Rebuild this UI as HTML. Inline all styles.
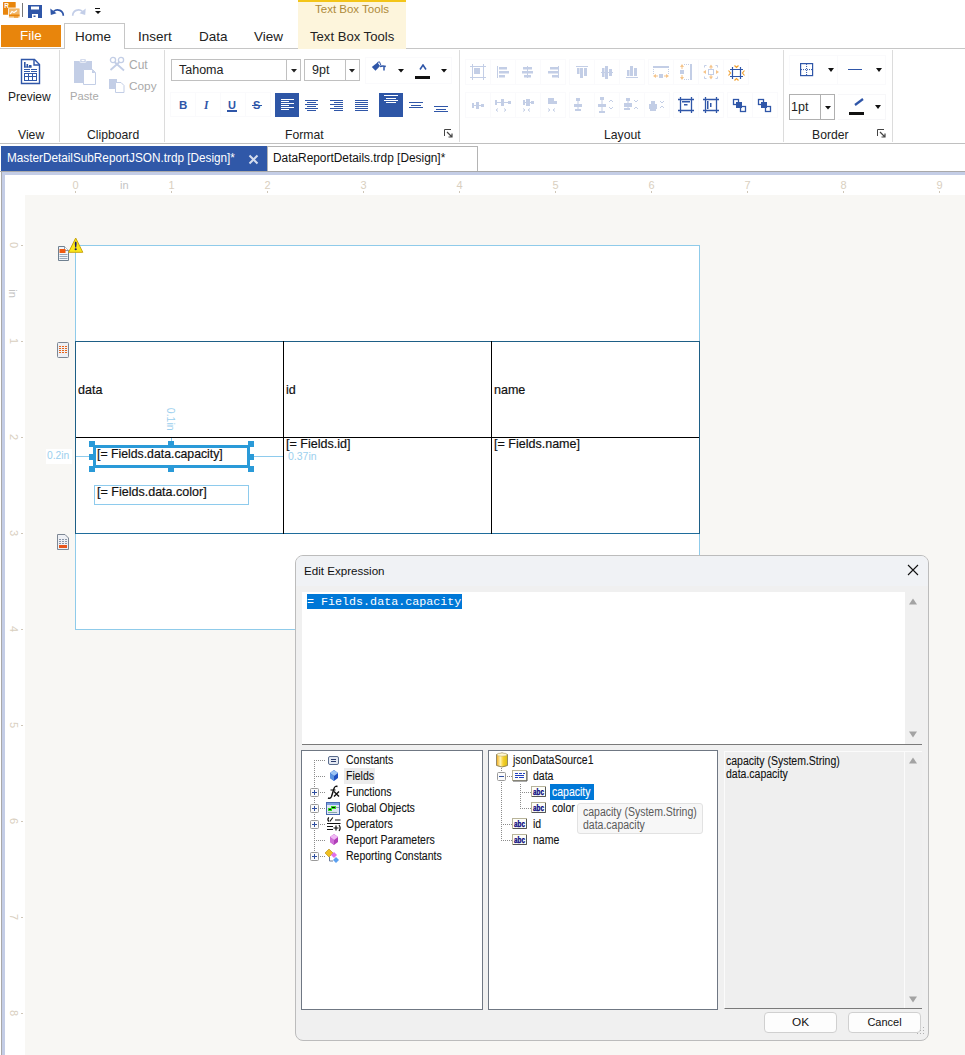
<!DOCTYPE html>
<html><head><meta charset="utf-8">
<style>
*{box-sizing:border-box;margin:0;padding:0}
html,body{width:965px;height:1055px;overflow:hidden;background:#fff;font-family:"Liberation Sans",sans-serif;color:#000}
.a{position:absolute}
.t{position:absolute;white-space:nowrap;line-height:1}
.sep{position:absolute;top:50px;width:1px;height:92px;background:#dcdcdc}
.glab{position:absolute;top:129px;font-size:12.2px;color:#222;white-space:nowrap;line-height:1}
.rl{position:absolute;font-size:11px;color:#d8ccb8;line-height:1}
.tick{position:absolute;background:#c8bfae}
.vl{position:absolute;font-size:11px;color:#d8ccb8;line-height:1;transform:rotate(90deg);transform-origin:center}
.rt{color:#111;-webkit-text-stroke:0.2px currentColor;transform:scaleX(0.95);transform-origin:0 0}
.hd{width:6px;height:6px;background:#2a9ad8}
.tr{font-size:12px;color:#111;-webkit-text-stroke:0.1px currentColor;transform:scaleX(0.875);transform-origin:0 0}
.btn{background:#fdfdfd;border:1px solid #d0d0d0;border-radius:4px}
.dot{position:absolute;border-color:#a0a0a0;border-style:dotted}
</style></head><body>

<!-- quick access toolbar -->
<div id="qat">
  <svg class="a" style="left:2px;top:1px" width="19" height="18" viewBox="0 0 19 18"><rect x="1" y="1" width="12.7" height="12.7" rx="0.5" fill="#e8850c"/><text x="2.2" y="6.8" font-family="Liberation Sans" font-weight="bold" font-size="6.5" fill="#fff">R</text><rect x="6.5" y="7" width="11.5" height="10" rx="1" fill="#f2b666" stroke="#fff" stroke-width="0.8"/><path d="M8 13.5L10 10.5L12 11.5L15 9.5" stroke="#fff" stroke-width="1.2" fill="none"/><rect x="7" y="13.5" width="10.5" height="1.5" fill="#e8850c"/><rect x="12" y="15.5" width="4" height="1" fill="#e8850c"/></svg>
<div class="a" style="left:22px;top:3px;width:1px;height:14px;background:#777"></div>
  <svg class="a" style="left:28px;top:5px" width="14" height="13" viewBox="0 0 14 13"><path d="M0 0H14V13H10V9H4V13H0Z M3 1.5V4.5H11V1.5Z" fill="#2f56a8" fill-rule="evenodd"/><rect x="5.5" y="10.5" width="2" height="1.5" fill="#2f56a8"/></svg>
  <svg class="a" style="left:50px;top:7px" width="15" height="9" viewBox="0 0 15 9"><path d="M3.5 4.5 A5.8 5.8 0 0 1 13.3 8.8" stroke="#2f56a8" stroke-width="1.7" fill="none"/><path d="M0.3 1.5 L0.8 8 L6.5 6.2 Z" fill="#2f56a8"/></svg>
  <svg class="a" style="left:71px;top:7px" width="15" height="9" viewBox="0 0 15 9"><path d="M11.5 4.5 A5.8 5.8 0 0 0 1.7 8.8" stroke="#c3cee8" stroke-width="1.7" fill="none"/><path d="M14.7 1.5 L14.2 8 L8.5 6.2 Z" fill="#c3cee8"/></svg>
  <div class="a" style="left:95px;top:8px;width:5px;height:1px;background:#111"></div>
  <svg class="a" style="left:95px;top:11px" width="6" height="3" viewBox="0 0 6 3"><path d="M0 0H6L3 3Z" fill="#111"/></svg>
</div>

<!-- context tab -->
<div class="a" style="left:298px;top:0;width:108px;height:48px;background:#fdf5dc"></div>
<div class="a" style="left:298px;top:0;width:108px;height:2px;background:#f3c519"></div>
<div class="t" id="ctxh" style="left:315px;top:4px;font-size:11.5px;color:#ad8a3a">Text Box Tools</div>

<!-- ribbon tabs -->
<div class="a" style="left:0;top:48px;width:965px;height:1px;background:#c6c6c6"></div>
<div class="a" style="left:298px;top:48px;width:108px;height:1px;background:#fdf5dc"></div>
<div class="a" style="left:1px;top:25px;width:60px;height:22px;background:#e8850c"></div>
<div class="t" style="left:20px;top:29px;font-size:13.5px;color:#fff">File</div>
<div class="a" style="left:64px;top:23px;width:61px;height:26px;background:#fff;border:1px solid #c6c6c6;border-bottom:none"></div>
<div class="t" id="tHome" style="left:75px;top:30px;font-size:13.5px;color:#222">Home</div>
<div class="t" id="tIns" style="left:138px;top:30px;font-size:13.5px;color:#222">Insert</div>
<div class="t" id="tData" style="left:199px;top:30px;font-size:13.5px;color:#222">Data</div>
<div class="t" id="tView" style="left:254px;top:30px;font-size:13.5px;color:#222">View</div>
<div class="t" id="tTBT" style="left:310px;top:30px;font-size:13.1px;color:#222">Text Box Tools</div>

<!-- ribbon body -->
<div class="a" style="left:0;top:143px;width:965px;height:1px;background:#c0c0c0"></div>
<div class="sep" style="left:59px"></div>
<div class="sep" style="left:164px"></div>
<div class="sep" style="left:459px"></div>
<div class="sep" style="left:783px"></div>
<div class="sep" style="left:892px"></div>
<div class="glab" style="left:18px">View</div>
<div class="glab" style="left:87px">Clipboard</div>
<div class="glab" style="left:285px">Format</div>
<div class="glab" style="left:604px">Layout</div>
<div class="glab" style="left:812px">Border</div>

<div id="ribbon">
<!-- Preview -->
<svg class="a" style="left:20px;top:58px" width="21" height="27" viewBox="0 0 21 27"><path d="M1.5 1.5H14.5L19.5 6.5V25.5H1.5Z" fill="none" stroke="#2f56a8" stroke-width="1.4"/><path d="M14 1.5V7H19.5" fill="none" stroke="#2f56a8" stroke-width="1.4"/><rect x="4" y="4" width="1.6" height="5.5" fill="#2f56a8"/><rect x="6.5" y="6" width="1.6" height="3.5" fill="#2f56a8"/><rect x="9" y="7" width="2.5" height="2.5" fill="#2f56a8"/><rect x="4" y="8.5" width="7.5" height="1" fill="#2f56a8"/><rect x="4" y="11" width="6" height="1" fill="#2f56a8"/><rect x="11" y="11" width="6" height="1" fill="#2f56a8"/><rect x="4" y="13" width="6" height="1" fill="#2f56a8"/><rect x="11" y="13" width="6" height="1" fill="#2f56a8"/><path d="M4 15H17V23H4Z M5 16V18H8V16Z M9 16V18H12V16Z M13 16V18H16V16Z M5 19V22H8V19Z M9 19V22H12V19Z M13 19V22H16V19Z" fill="#2f56a8" fill-rule="evenodd"/></svg>
<div class="t" id="pv" style="left:8px;top:91px;font-size:12px;color:#222">Preview</div>
<!-- Paste -->
<svg class="a" style="left:74px;top:59px" width="23" height="27" viewBox="0 0 23 27"><rect x="0" y="2" width="18" height="22" fill="#c3cee6"/><rect x="6" y="0" width="6" height="3.5" rx="0.8" fill="#c3cee6" stroke="#fff" stroke-width="0.6"/><rect x="7.5" y="1" width="3" height="1.2" fill="#fff"/><path d="M9.5 10.5H18.5L21.5 13.5V25.5H9.5Z" fill="#fff" stroke="#c3cee6" stroke-width="1"/><path d="M18 10.5V14H21.5" fill="#c3cee6"/></svg>
<div class="t" id="ps" style="left:70px;top:91px;font-size:11.2px;color:#a9a9a9">Paste</div>
<!-- Cut -->
<svg class="a" style="left:109px;top:56px" width="16" height="16" viewBox="0 0 16 16"><circle cx="4" cy="4" r="2.6" fill="none" stroke="#c3cee6" stroke-width="1.3"/><circle cx="12" cy="4" r="2.6" fill="none" stroke="#c3cee6" stroke-width="1.3"/><path d="M5.5 6L15 14.5M10.5 6L1.5 14" stroke="#c3cee6" stroke-width="1.8"/></svg>
<div class="t" id="ct" style="left:129px;top:59px;font-size:12px;color:#a9a9a9">Cut</div>
<svg class="a" style="left:109px;top:79px" width="16" height="15" viewBox="0 0 16 15"><rect x="0" y="0" width="8" height="10" fill="#c3cee6"/><path d="M6.5 3.5H12L15 6.5V13.5H6.5Z" fill="#fff" stroke="#c3cee6" stroke-width="1"/></svg>
<div class="t" id="cp" style="left:129px;top:81px;font-size:11.8px;color:#a9a9a9">Copy</div>

<!-- font combo -->
<div class="a" style="left:171px;top:59px;width:130px;height:22px;border:1px solid #c0c0c0;background:#fff"></div>
<div class="a" style="left:286px;top:60px;width:1px;height:20px;background:#c0c0c0"></div>
<div class="t" id="fn" style="left:179px;top:64px;font-size:12.5px;color:#222">Tahoma</div>
<svg class="a" style="left:291px;top:69px" width="6" height="4"><path d="M0 0H6L3 3.5Z" fill="#222"/></svg>
<div class="a" style="left:304px;top:59px;width:56px;height:22px;border:1px solid #c0c0c0;background:#fff"></div>
<div class="a" style="left:345px;top:60px;width:1px;height:20px;background:#c0c0c0"></div>
<div class="t" id="fs" style="left:312px;top:64px;font-size:12.5px;color:#222">9pt</div>
<svg class="a" style="left:349px;top:69px" width="6" height="4"><path d="M0 0H6L3 3.5Z" fill="#222"/></svg>
<!-- fill/font color -->
<div class="a" style="left:365px;top:57px;width:87px;height:27px;border:1px solid #fafafc"></div>
<svg class="a" style="left:371px;top:61px" width="16" height="11" viewBox="0 0 16 11"><path d="M0.8 6L6.5 1.5L9 5L4.5 9.8Z" fill="#2f56a8"/><path d="M6.3 1.5L8.5 0.8L10 4.5" stroke="#2f56a8" stroke-width="1" fill="none"/><path d="M9 5.5Q12 4.3 14.8 5.5" stroke="#2f56a8" stroke-width="1.5" fill="none"/><path d="M13 5.5V9.5" stroke="#2f56a8" stroke-width="1.5"/></svg>
<svg class="a" style="left:398px;top:69px" width="6" height="4"><path d="M0 0H6L3 3.5Z" fill="#111"/></svg>
<svg class="a" style="left:419px;top:64px" width="8" height="6" viewBox="0 0 8 6"><path d="M1 5.5L4 1L7 5.5" stroke="#2f56a8" stroke-width="1.6" fill="none"/></svg>
<div class="a" style="left:415px;top:76px;width:15px;height:3px;background:#111"></div>
<svg class="a" style="left:441px;top:69px" width="6" height="4"><path d="M0 0H6L3 3.5Z" fill="#111"/></svg>

<!-- B I U S -->
<div class="a" style="left:170px;top:92px;width:101px;height:25px;border:1px solid #fafafc"></div>
<div class="a" style="left:195px;top:93px;width:1px;height:23px;background:#fafafc"></div>
<div class="a" style="left:220px;top:93px;width:1px;height:23px;background:#fafafc"></div>
<div class="a" style="left:245px;top:93px;width:1px;height:23px;background:#fafafc"></div>
<div class="t" style="left:179px;top:100px;font-size:11.5px;font-weight:bold;color:#2f56a8">B</div>
<div class="t" style="left:204px;top:100px;font-size:11.5px;font-style:italic;font-weight:bold;color:#2f56a8;font-family:'Liberation Serif',serif">I</div>
<div class="t" style="left:228px;top:100px;font-size:11px;font-weight:bold;color:#2f56a8">U</div>
<div class="a" style="left:227px;top:110px;width:10px;height:1.5px;background:#2f56a8"></div>
<div class="t" style="left:253px;top:100px;font-size:11px;font-weight:bold;color:#2f56a8">S</div>
<div class="a" style="left:252px;top:105px;width:10px;height:1px;background:#2f56a8"></div>
<!-- align -->
<div class="a" style="left:275px;top:93px;width:24px;height:24px;background:#2e56a6"></div>
<svg class="a" style="left:275px;top:93px" width="24" height="24"><g fill="#fff"><rect x="6" y="6" width="13" height="1"/><rect x="6" y="8" width="8" height="1"/><rect x="6" y="10" width="13" height="1"/><rect x="6" y="12" width="8" height="1"/><rect x="6" y="14" width="13" height="1"/><rect x="6" y="16" width="8" height="1"/></g></svg>
<svg class="a" style="left:299px;top:93px" width="24" height="24"><g fill="#2f56a8"><rect x="6" y="7" width="13" height="1"/><rect x="8" y="9" width="9" height="1"/><rect x="6" y="11" width="13" height="1"/><rect x="8" y="13" width="9" height="1"/><rect x="6" y="15" width="13" height="1"/><rect x="8" y="17" width="9" height="1"/></g></svg>
<svg class="a" style="left:324px;top:93px" width="24" height="24"><g fill="#2f56a8"><rect x="6" y="7" width="13" height="1"/><rect x="10" y="9" width="9" height="1"/><rect x="6" y="11" width="13" height="1"/><rect x="10" y="13" width="9" height="1"/><rect x="6" y="15" width="13" height="1"/><rect x="10" y="17" width="9" height="1"/></g></svg>
<svg class="a" style="left:349px;top:93px" width="24" height="24"><g fill="#2f56a8"><rect x="6" y="7" width="13" height="1"/><rect x="6" y="9" width="13" height="1"/><rect x="6" y="11" width="13" height="1"/><rect x="6" y="13" width="13" height="1"/><rect x="6" y="15" width="13" height="1"/><rect x="6" y="17" width="13" height="1"/></g></svg>
<div class="a" style="left:379px;top:93px;width:24px;height:24px;background:#2e56a6"></div>
<svg class="a" style="left:379px;top:93px" width="24" height="24"><g fill="#fff"><rect x="5" y="2" width="14" height="1"/><rect x="7" y="5" width="10" height="1"/><rect x="5" y="7" width="14" height="1"/><rect x="7" y="9" width="10" height="1"/></g></svg>
<svg class="a" style="left:403px;top:93px" width="24" height="24"><g fill="#2f56a8"><rect x="6" y="9" width="14" height="1"/><rect x="8" y="12" width="10" height="1"/><rect x="6" y="14" width="14" height="1"/></g></svg>
<svg class="a" style="left:428px;top:93px" width="24" height="24"><g fill="#2f56a8"><rect x="6" y="13" width="14" height="1"/><rect x="8" y="16" width="10" height="1"/><rect x="6" y="18" width="14" height="1"/></g></svg>
<svg class="a" style="left:444px;top:129px" width="9" height="9" viewBox="0 0 9 9"><path d="M0.5 7V0.5H7" stroke="#444" fill="none"/><path d="M3 3L8 8M8 4.5V8H4.5" stroke="#444" fill="none" stroke-width="1.2"/></svg>
<div class="a" style="left:465px;top:59px;width:101px;height:26px;border:1px solid #fafafc"></div>
<div class="a" style="left:490px;top:60px;width:1px;height:24px;background:#fafafc"></div>
<div class="a" style="left:515px;top:60px;width:1px;height:24px;background:#fafafc"></div>
<div class="a" style="left:540px;top:60px;width:1px;height:24px;background:#fafafc"></div>
<div class="a" style="left:569px;top:59px;width:76px;height:26px;border:1px solid #fafafc"></div>
<div class="a" style="left:594px;top:60px;width:1px;height:24px;background:#fafafc"></div>
<div class="a" style="left:619px;top:60px;width:1px;height:24px;background:#fafafc"></div>
<div class="a" style="left:648px;top:59px;width:101px;height:26px;border:1px solid #fafafc"></div>
<div class="a" style="left:673px;top:60px;width:1px;height:24px;background:#fafafc"></div>
<div class="a" style="left:698px;top:60px;width:1px;height:24px;background:#fafafc"></div>
<div class="a" style="left:723px;top:60px;width:1px;height:24px;background:#fafafc"></div>
<div class="a" style="left:465px;top:92px;width:101px;height:26px;border:1px solid #fafafc"></div>
<div class="a" style="left:490px;top:93px;width:1px;height:24px;background:#fafafc"></div>
<div class="a" style="left:515px;top:93px;width:1px;height:24px;background:#fafafc"></div>
<div class="a" style="left:540px;top:93px;width:1px;height:24px;background:#fafafc"></div>
<div class="a" style="left:569px;top:92px;width:101px;height:26px;border:1px solid #fafafc"></div>
<div class="a" style="left:594px;top:93px;width:1px;height:24px;background:#fafafc"></div>
<div class="a" style="left:619px;top:93px;width:1px;height:24px;background:#fafafc"></div>
<div class="a" style="left:644px;top:93px;width:1px;height:24px;background:#fafafc"></div>
<div class="a" style="left:673px;top:92px;width:51px;height:26px;border:1px solid #fafafc"></div>
<div class="a" style="left:698px;top:93px;width:1px;height:24px;background:#fafafc"></div>
<div class="a" style="left:727px;top:92px;width:51px;height:26px;border:1px solid #fafafc"></div>
<div class="a" style="left:752px;top:93px;width:1px;height:24px;background:#fafafc"></div>
<svg class="a" style="left:460px;top:55px" width="330" height="65" viewBox="460 55 330 65">
<g fill="#c3cee6">
<!-- r1 b1 -->
<rect x="470" y="66" width="16" height="1"/><rect x="470" y="77" width="16" height="1"/><rect x="472" y="64" width="1" height="16"/><rect x="483" y="64" width="1" height="16"/><rect x="474" y="68" width="6" height="6"/>
<!-- r1 b2 -->
<rect x="497" y="66" width="1" height="12"/><rect x="499" y="67" width="8" height="2.5"/><rect x="499" y="71" width="10" height="2.5"/><rect x="499" y="75" width="6" height="2.5"/>
<!-- r1 b3 -->
<rect x="527" y="66" width="1" height="12"/><rect x="523" y="67" width="9" height="2.5"/><rect x="522" y="71" width="11" height="2.5"/><rect x="524" y="75" width="7" height="2.5"/>
<!-- r1 b4 -->
<rect x="558" y="66" width="1" height="12"/><rect x="550" y="67" width="8" height="2.5"/><rect x="548" y="71" width="10" height="2.5"/><rect x="552" y="75" width="6" height="2.5"/>
<!-- r1 g2 b1 top -->
<rect x="576" y="66" width="12" height="1"/><rect x="577" y="68" width="2.5" height="6"/><rect x="580" y="68" width="3" height="10"/><rect x="584" y="68" width="3" height="8"/>
<!-- b2 middle -->
<rect x="601" y="72" width="12" height="1"/><rect x="602" y="68" width="2.5" height="9"/><rect x="605" y="66" width="3" height="13"/><rect x="609" y="69" width="3" height="7"/>
<!-- b3 bottom -->
<rect x="626" y="77" width="12" height="1"/><rect x="627" y="70" width="2.5" height="6"/><rect x="630" y="66" width="3" height="10"/><rect x="634" y="68" width="3" height="8"/>
</g>
<g stroke="#c3cee6" stroke-width="1" fill="none">

</g>
<g fill="#c3cee6">
<rect x="653" y="66" width="16" height="2"/><rect x="659" y="74" width="4" height="4"/>
<rect x="653" y="69" width="1" height="1"/><rect x="653" y="71" width="1" height="1"/><rect x="653" y="73" width="1" height="1"/><rect x="668" y="69" width="1" height="1"/><rect x="668" y="71" width="1" height="1"/><rect x="668" y="73" width="1" height="1"/>
<rect x="690" y="64" width="2" height="16"/><rect x="680" y="70" width="4" height="4"/>
<rect x="684" y="64" width="1" height="1"/><rect x="686" y="64" width="1" height="1"/><rect x="688" y="64" width="1" height="1"/><rect x="684" y="79" width="1" height="1"/><rect x="686" y="79" width="1" height="1"/><rect x="688" y="79" width="1" height="1"/>
</g>
<path d="M706.5 65.5H704.5V67.5M704.5 76.5V78.5H706.5M715.5 65.5H717.5V67.5M717.5 76.5V78.5H715.5" stroke="#c3cee6" stroke-width="1" fill="none"/>
<rect x="708.5" y="69.5" width="5" height="5" fill="none" stroke="#c3cee6" stroke-width="1"/>
<g fill="#f5c48a">
<path d="M653 76L656 74V78Z"/><rect x="656" y="75.5" width="2" height="1"/><path d="M669 76L666 74V78Z"/><rect x="664" y="75.5" width="2" height="1"/>
<path d="M682 64L680 67H684Z"/><rect x="681.5" y="67" width="1" height="2"/><path d="M682 80L680 77H684Z"/><rect x="681.5" y="75" width="1" height="2"/>
<path d="M711 64.5L709 67.5H713Z"/><rect x="710.5" y="67" width="1" height="2"/><path d="M711 79.5L709 76.5H713Z"/><rect x="710.5" y="75" width="1" height="2"/>
<path d="M703 72L706 70V74Z"/><path d="M719 72L716 70V74Z"/>
</g>
<path d="M732.5 69.5H740.5V76.5H732.5Z M730 69.5H743M730 76.5H743M732.5 67V79M740.5 67V79" stroke="#2f56a8" stroke-width="1.2" fill="none"/>
<path d="M734.5 65.5L736.5 67.5L738.5 65.5M734.5 80.5L736.5 78.5L738.5 80.5M728.5 70.5L730.5 73L728.5 75.5M744.5 70.5L742.5 73L744.5 75.5" stroke="#f0a030" stroke-width="1.2" fill="none"/>
</svg>
<svg class="a" style="left:460px;top:88px" width="330" height="35" viewBox="460 88 330 35">
<g fill="#c3cee6">
<!-- row2 g1 -->
<rect x="472" y="103" width="2" height="5"/><rect x="472" y="105" width="12" height="1"/><rect x="476" y="102" width="3" height="7"/><rect x="481" y="104" width="3" height="3"/>
<rect x="495" y="100" width="2" height="5"/><rect x="495" y="102" width="15" height="1"/><rect x="501" y="99" width="3" height="7"/><rect x="508" y="101" width="3" height="3"/>
<rect x="523" y="100" width="2" height="5"/><rect x="523" y="102" width="10" height="1"/><rect x="526" y="99" width="4" height="7"/><rect x="531" y="101" width="3" height="3"/>
<rect x="548" y="98" width="6" height="6"/><rect x="554" y="101" width="3" height="3"/>
<rect x="576" y="98" width="4" height="3"/><rect x="577.5" y="101" width="1" height="3"/><rect x="574" y="104" width="8" height="3"/><rect x="577.5" y="107" width="1" height="2"/><rect x="575" y="109" width="6" height="2"/>
<rect x="600" y="97" width="4" height="3"/><rect x="601.5" y="100" width="1" height="12"/><rect x="598" y="104" width="8" height="3"/><rect x="599" y="111" width="6" height="2"/>
<rect x="626" y="98" width="4" height="3"/><rect x="627.5" y="101" width="1" height="8"/><rect x="624" y="103" width="8" height="4"/><rect x="624" y="108" width="6" height="2"/>
<rect x="651" y="101" width="4" height="3"/><rect x="649" y="104" width="8" height="5"/><rect x="650" y="109" width="6" height="2"/>
</g>
<g stroke="#c3cee6" stroke-width="1" fill="none">
<path d="M498 108.5L496 110L498 111.5M504 108.5L506 110L504 111.5"/>
<path d="M523 108.5L525 110L523 111.5M530 108.5L528 110L530 111.5"/>
<path d="M548 108.5L550 110L548 111.5M555 108.5L553 110L555 111.5"/>
<path d="M609 102L611 100L613 102M609 107L611 109L613 107"/>
<path d="M634 100L636 102L638 100M634 109L636 107L638 109"/>
<path d="M660 101L662 103L664 101M660 108L662 106L664 108"/>
</g>
<g stroke="#2f56a8" stroke-width="1.3" fill="none">
<path d="M678 99.5H694M678 110.5H694M680.5 97V113M691.5 97V113"/>
<path d="M703 99.5H719M703 110.5H719M705.5 97V113M716.5 97V113"/>
<rect x="733.5" y="99.5" width="5" height="5"/><rect x="740.5" y="106.5" width="5" height="5"/>
<rect x="758.5" y="99.5" width="5" height="5"/><rect x="765.5" y="106.5" width="5" height="5"/>
</g>
<g fill="#2f56a8">
<rect x="682" y="101" width="8" height="1.5"/><rect x="684" y="104" width="3.5" height="1.5"/>
<rect x="707" y="101" width="1.5" height="8"/><rect x="710" y="103" width="1.5" height="4"/>
<rect x="736" y="102" width="6" height="6"/><rect x="761" y="102" width="6" height="6"/>
</g>
</svg>

<div class="a" style="left:789px;top:55px;width:97px;height:30px;border:1px solid #fafafc"></div>
<div class="a" style="left:837px;top:56px;width:1px;height:28px;background:#fafafc"></div>
<svg class="a" style="left:800px;top:63px" width="14" height="14" viewBox="0 0 14 14"><rect x="0.6" y="0.6" width="12" height="12" fill="none" stroke="#2f56a8" stroke-width="1.2"/><path d="M6.6 1V12M1 6.6H12" stroke="#2f56a8" stroke-width="1" stroke-dasharray="1 1"/></svg>
<svg class="a" style="left:828px;top:68px" width="6" height="4"><path d="M0 0H6L3 4Z" fill="#111"/></svg>
<div class="a" style="left:848px;top:69px;width:14px;height:1px;background:#2f56a8"></div>
<svg class="a" style="left:876px;top:68px" width="6" height="4"><path d="M0 0H6L3 4Z" fill="#111"/></svg>
<div class="a" style="left:789px;top:94px;width:46px;height:26px;border:1px solid #b0b0b0;background:#fff"></div>
<div class="a" style="left:820px;top:95px;width:1px;height:24px;background:#b0b0b0"></div>
<div class="t" id="onept" style="left:791px;top:101px;font-size:12.5px;color:#222">1pt</div>
<svg class="a" style="left:825px;top:106px" width="6" height="4"><path d="M0 0H6L3 3.5Z" fill="#111"/></svg>
<div class="a" style="left:838px;top:94px;width:48px;height:26px;border:1px solid #f7f7f9;border-left:none"></div>
<svg class="a" style="left:854px;top:98px" width="10" height="8" viewBox="0 0 10 8"><path d="M1 7L9 1" stroke="#2f56a8" stroke-width="2.2"/></svg>
<div class="a" style="left:849px;top:112px;width:15px;height:3px;background:#111"></div>
<svg class="a" style="left:875px;top:105px" width="6" height="4"><path d="M0 0H6L3 4Z" fill="#111"/></svg>
<svg class="a" style="left:877px;top:129px" width="9" height="9" viewBox="0 0 9 9"><path d="M0.5 7V0.5H7" stroke="#444" fill="none"/><path d="M3 3L8 8M8 4.5V8H4.5" stroke="#444" fill="none" stroke-width="1.2"/></svg>

</div>

<!-- document tabs -->
<div class="a" style="left:0;top:171px;width:965px;height:1px;background:#a9a9a9"></div>
<div class="a" style="left:1px;top:146px;width:266px;height:25px;background:#3058a8"></div>
<div class="t" id="dt1" style="left:7px;top:152px;font-size:12.5px;color:#fff;transform:scaleX(0.94);transform-origin:0 0">MasterDetailSubReportJSON.trdp [Design]*</div>
<svg class="a" style="left:248px;top:154px" width="11" height="11" viewBox="0 0 11 11"><path d="M1.5 1.5L9.5 9.5M9.5 1.5L1.5 9.5" stroke="#d4dcee" stroke-width="2"/></svg>
<div class="a" style="left:267px;top:146px;width:211px;height:25px;background:#fff;border:1px solid #b4b4b4;border-bottom:none"></div>
<div class="t" id="dt2" style="left:273px;top:152px;font-size:12.5px;color:#111;transform:scaleX(0.95);transform-origin:0 0">DataReportDetails.trdp [Design]*</div>

<!-- design area frame -->
<div class="a" style="left:2px;top:172px;width:963px;height:3px;background:#c4cde6"></div>
<div class="a" style="left:1px;top:172px;width:1px;height:883px;background:#a8a8a8"></div>
<div class="a" style="left:2px;top:175px;width:3px;height:880px;background:#c4cde6"></div>
<div class="a" style="left:5px;top:175px;width:960px;height:880px;background:#fff"></div>
<div class="a" style="left:25px;top:195px;width:940px;height:860px;background:#f8f7f4"></div>

<div id="rulers">
<div class="t" style="left:72px;top:180px;font-size:11px;color:#d9cfc0;width:7px;text-align:center">0</div>
<div class="a" style="left:75px;top:191px;width:1px;height:2px;background:#cfc6b8"></div>
<div class="t" style="left:168px;top:180px;font-size:11px;color:#d9cfc0;width:7px;text-align:center">1</div>
<div class="a" style="left:171px;top:191px;width:1px;height:2px;background:#cfc6b8"></div>
<div class="t" style="left:264px;top:180px;font-size:11px;color:#d9cfc0;width:7px;text-align:center">2</div>
<div class="a" style="left:267px;top:191px;width:1px;height:2px;background:#cfc6b8"></div>
<div class="t" style="left:360px;top:180px;font-size:11px;color:#d9cfc0;width:7px;text-align:center">3</div>
<div class="a" style="left:363px;top:191px;width:1px;height:2px;background:#cfc6b8"></div>
<div class="t" style="left:456px;top:180px;font-size:11px;color:#d9cfc0;width:7px;text-align:center">4</div>
<div class="a" style="left:459px;top:191px;width:1px;height:2px;background:#cfc6b8"></div>
<div class="t" style="left:552px;top:180px;font-size:11px;color:#d9cfc0;width:7px;text-align:center">5</div>
<div class="a" style="left:555px;top:191px;width:1px;height:2px;background:#cfc6b8"></div>
<div class="t" style="left:648px;top:180px;font-size:11px;color:#d9cfc0;width:7px;text-align:center">6</div>
<div class="a" style="left:651px;top:191px;width:1px;height:2px;background:#cfc6b8"></div>
<div class="t" style="left:744px;top:180px;font-size:11px;color:#d9cfc0;width:7px;text-align:center">7</div>
<div class="a" style="left:747px;top:191px;width:1px;height:2px;background:#cfc6b8"></div>
<div class="t" style="left:840px;top:180px;font-size:11px;color:#d9cfc0;width:7px;text-align:center">8</div>
<div class="a" style="left:843px;top:191px;width:1px;height:2px;background:#cfc6b8"></div>
<div class="t" style="left:936px;top:180px;font-size:11px;color:#d9cfc0;width:7px;text-align:center">9</div>
<div class="a" style="left:939px;top:191px;width:1px;height:2px;background:#cfc6b8"></div>
<div class="t" style="left:120px;top:180px;font-size:11px;color:#c4c4c4">in</div>
<div class="t" style="left:10px;top:240px;font-size:11px;color:#d9cfc0;width:8px;height:10px;text-align:center;transform:rotate(90deg)">0</div>
<div class="a" style="left:21px;top:245px;width:2px;height:1px;background:#cfc6b8"></div>
<div class="t" style="left:10px;top:336px;font-size:11px;color:#d9cfc0;width:8px;height:10px;text-align:center;transform:rotate(90deg)">1</div>
<div class="a" style="left:21px;top:341px;width:2px;height:1px;background:#cfc6b8"></div>
<div class="t" style="left:10px;top:432px;font-size:11px;color:#d9cfc0;width:8px;height:10px;text-align:center;transform:rotate(90deg)">2</div>
<div class="a" style="left:21px;top:437px;width:2px;height:1px;background:#cfc6b8"></div>
<div class="t" style="left:10px;top:528px;font-size:11px;color:#d9cfc0;width:8px;height:10px;text-align:center;transform:rotate(90deg)">3</div>
<div class="a" style="left:21px;top:533px;width:2px;height:1px;background:#cfc6b8"></div>
<div class="t" style="left:10px;top:624px;font-size:11px;color:#d9cfc0;width:8px;height:10px;text-align:center;transform:rotate(90deg)">4</div>
<div class="a" style="left:21px;top:629px;width:2px;height:1px;background:#cfc6b8"></div>
<div class="t" style="left:10px;top:720px;font-size:11px;color:#d9cfc0;width:8px;height:10px;text-align:center;transform:rotate(90deg)">5</div>
<div class="a" style="left:21px;top:725px;width:2px;height:1px;background:#cfc6b8"></div>
<div class="t" style="left:10px;top:816px;font-size:11px;color:#d9cfc0;width:8px;height:10px;text-align:center;transform:rotate(90deg)">6</div>
<div class="a" style="left:21px;top:821px;width:2px;height:1px;background:#cfc6b8"></div>
<div class="t" style="left:10px;top:912px;font-size:11px;color:#d9cfc0;width:8px;height:10px;text-align:center;transform:rotate(90deg)">7</div>
<div class="a" style="left:21px;top:917px;width:2px;height:1px;background:#cfc6b8"></div>
<div class="t" style="left:10px;top:1008px;font-size:11px;color:#d9cfc0;width:8px;height:10px;text-align:center;transform:rotate(90deg)">8</div>
<div class="a" style="left:21px;top:1013px;width:2px;height:1px;background:#cfc6b8"></div>
<div class="t" style="left:8px;top:288px;font-size:11px;color:#c4c4c4;transform:rotate(90deg)">in</div>
</div>

<!-- report page -->
<div class="a" style="left:75px;top:245px;width:625px;height:385px;background:#fff;border:1px solid #8fcbea"></div>

<div id="report">
<!-- table lines -->
<div class="a" style="left:75px;top:341px;width:625px;height:1px;background:#1e5f86"></div>
<div class="a" style="left:75px;top:437px;width:625px;height:1px;background:#000"></div>
<div class="a" style="left:75px;top:533px;width:625px;height:1px;background:#1f6d9c"></div>
<div class="a" style="left:75px;top:341px;width:1px;height:193px;background:#1e5f86"></div>
<div class="a" style="left:699px;top:341px;width:1px;height:193px;background:#1e5f86"></div>
<div class="a" style="left:283px;top:341px;width:1px;height:193px;background:#000"></div>
<div class="a" style="left:491px;top:341px;width:1px;height:193px;background:#000"></div>
<div class="t rt" style="left:78px;top:383px;font-size:13.2px">data</div>
<div class="t rt" style="left:286px;top:383px;font-size:13.2px">id</div>
<div class="t rt" style="left:494px;top:383px;font-size:13.2px">name</div>
<div class="t rt" style="left:286px;top:437px;font-size:13.2px">[= Fields.id]</div>
<div class="t rt" style="left:494px;top:437px;font-size:13.2px">[= Fields.name]</div>
<!-- selected textbox -->
<div class="a" style="left:93px;top:445px;width:157px;height:23px;border:3px solid #2a9ad8"></div>
<div class="t rt" style="left:97px;top:447px;font-size:13.2px;transform:scaleX(0.93)">[= Fields.data.capacity]</div>
<div class="a hd" style="left:89px;top:441px"></div>
<div class="a hd" style="left:168px;top:441px"></div>
<div class="a hd" style="left:248px;top:441px"></div>
<div class="a hd" style="left:89px;top:454px"></div>
<div class="a hd" style="left:248px;top:454px"></div>
<div class="a hd" style="left:89px;top:466px"></div>
<div class="a hd" style="left:168px;top:466px"></div>
<div class="a hd" style="left:248px;top:466px"></div>
<div class="a" style="left:171px;top:438px;width:1px;height:3px;background:#8ecbed"></div>
<div class="a" style="left:46px;top:449px;width:26px;height:15px;background:#fff"></div>
<div class="a" style="left:76px;top:456px;width:13px;height:1px;background:#8ecbed"></div>
<div class="a" style="left:254px;top:456px;width:29px;height:1px;background:#8ecbed"></div>
<div class="t" style="left:47px;top:451px;font-size:10.3px;color:#9ccfee">0.2in</div>
<div class="t" style="left:288px;top:451px;font-size:10.5px;color:#9ccfee">0.37in</div>
<div class="t" style="left:159px;top:414px;font-size:10.5px;color:#9ccfee;transform:rotate(90deg)">0.1in</div>
<div class="a" style="left:94px;top:485px;width:155px;height:20px;border:1px solid #8ecbed"></div>
<div class="t rt" style="left:97px;top:485px;font-size:13.2px">[= Fields.data.color]</div>
<!-- section icons -->
<svg class="a" style="left:58px;top:246px" width="11" height="15" viewBox="0 0 11 15"><path d="M0.5 0.5H6.5L10.5 4.5V14.5H0.5Z" fill="#f2f5f9" stroke="#6f8090"/><path d="M6.5 0.5V4.5H10.5" fill="#fff" stroke="#6f8090" stroke-width="0.8"/><rect x="1.5" y="3" width="6" height="4" fill="#f05a10"/><g fill="#9aa8b8"><rect x="1.5" y="8" width="8" height="1"/><rect x="1.5" y="10" width="8" height="1"/><rect x="1.5" y="12" width="8" height="1"/></g></svg>
<svg class="a" style="left:68px;top:237px" width="16" height="17" viewBox="0 0 16 17"><path d="M7.7 1L14.8 15.3H0.6Z" fill="#fbe81a" stroke="#c8a410" stroke-width="1" stroke-linejoin="round"/><path d="M7.7 4.5Q8.9 4.5 8.6 7L8.2 10.5H7.2L6.8 7Q6.5 4.5 7.7 4.5Z" fill="#14146a"/><ellipse cx="7.7" cy="12.3" rx="1.1" ry="1" fill="#14146a"/></svg>
<svg class="a" style="left:57px;top:342px" width="12" height="16" viewBox="0 0 12 16"><rect x="0.5" y="0.5" width="11" height="15" rx="1" fill="#eef0f4" stroke="#7d8794"/><g fill="#e8661c"><rect x="2" y="4" width="2" height="1"/><rect x="5" y="4" width="2" height="1"/><rect x="8" y="4" width="2" height="1"/><rect x="2" y="6" width="2" height="1"/><rect x="5" y="6" width="2" height="1"/><rect x="8" y="6" width="2" height="1"/><rect x="2" y="8" width="2" height="1"/><rect x="5" y="8" width="2" height="1"/><rect x="8" y="8" width="2" height="1"/><rect x="2" y="10" width="2" height="1"/><rect x="5" y="10" width="2" height="1"/><rect x="8" y="10" width="2" height="1"/></g></svg>
<svg class="a" style="left:57px;top:534px" width="12" height="16" viewBox="0 0 12 16"><path d="M0.5 0.5H8L11.5 4V15.5H0.5Z" fill="#eef0f4" stroke="#7d8794"/><g fill="#8a96a8"><rect x="2" y="5" width="2" height="1"/><rect x="5" y="5" width="2" height="1"/><rect x="8" y="5" width="2" height="1"/><rect x="2" y="7" width="2" height="1"/><rect x="5" y="7" width="2" height="1"/><rect x="8" y="7" width="2" height="1"/><rect x="2" y="9" width="2" height="1"/><rect x="5" y="9" width="2" height="1"/><rect x="8" y="9" width="2" height="1"/></g><rect x="2" y="11" width="8" height="3" fill="#e8561c"/></svg>
</div>

<!-- dialog -->
<div id="dialog">
<div class="a" style="left:295px;top:555px;width:634px;height:486px;background:#f0f0f0;border:1px solid #bcbcbc;border-radius:8px;overflow:hidden">
  <div class="a" style="left:0;top:0;width:632px;height:30px;background:#f0f2f5"></div>
</div>
<div class="t" id="dtitle" style="left:304px;top:565px;font-size:11.6px;color:#111">Edit Expression</div>
<svg class="a" style="left:907px;top:564px" width="12" height="12" viewBox="0 0 12 12"><path d="M1 1L11 11M11 1L1 11" stroke="#111" stroke-width="1.1"/></svg>
<!-- textarea -->
<div class="a" style="left:302px;top:592px;width:620px;height:153px;background:#fff;border-bottom:1px solid #7a7a7a"></div>
<div class="a" style="left:905px;top:592px;width:17px;height:152px;background:#f0f0f0"></div>
<svg class="a" style="left:909px;top:598px" width="9" height="7"><path d="M0 6.5H8L4 0.5Z" fill="#a3a3a3"/></svg>
<svg class="a" style="left:909px;top:731px" width="9" height="7"><path d="M0 0.5H8L4 6.5Z" fill="#a3a3a3"/></svg>
<div class="a" style="left:307px;top:594px;width:155px;height:15px;background:#0078d7"></div>
<div class="t" id="expr" style="left:307px;top:597px;font-family:'Liberation Mono',monospace;font-size:11.7px;color:#fff">= Fields.data.capacity</div>
<!-- panels -->
<div class="a" style="left:301px;top:750px;width:182px;height:260px;background:#fff;border:1px solid #6f7783"></div>
<div class="a" style="left:488px;top:750px;width:230px;height:260px;background:#fff;border:1px solid #6f7783"></div>
<div class="a" style="left:724px;top:751px;width:198px;height:258px;background:#efefef;border-top:1px solid #fbfbfb;border-left:1px solid #fbfbfb;border-bottom:1px solid #7a7a7a"></div>
<div class="a" style="left:904px;top:752px;width:1px;height:256px;background:#fbfbfb"></div>
<svg class="a" style="left:909px;top:757px" width="9" height="7"><path d="M0 6.5H8L4 0.5Z" fill="#a3a3a3"/></svg>
<svg class="a" style="left:909px;top:996px" width="9" height="7"><path d="M0 0.5H8L4 6.5Z" fill="#a3a3a3"/></svg>
<div class="t tr" style="left:726px;top:755px">capacity (System.String)</div>
<div class="t tr" style="left:726px;top:768px">data.capacity</div>
<!-- buttons -->
<div class="a btn" style="left:764px;top:1012px;width:73px;height:21px"></div>
<div class="t" style="left:764px;top:1017px;width:73px;text-align:center;font-size:11.8px;color:#111">OK</div>
<div class="a btn" style="left:848px;top:1012px;width:73px;height:21px"></div>
<div class="t" style="left:848px;top:1017px;width:73px;text-align:center;font-size:11px;color:#111">Cancel</div>
<svg class="a" style="left:914px;top:1026px" width="12" height="12"><g fill="#b0b0b0"><rect x="9" y="1" width="1" height="1"/><rect x="9" y="4" width="1" height="1"/><rect x="6" y="4" width="1" height="1"/><rect x="9" y="7" width="1" height="1"/><rect x="6" y="7" width="1" height="1"/><rect x="3" y="7" width="1" height="1"/></g></svg>
<div id="trees"><svg class="a" style="left:0;top:0" width="965" height="1055"><g fill="#8c8c8c"><rect x="314" y="760" width="1" height="1"/><rect x="314" y="762" width="1" height="1"/><rect x="314" y="764" width="1" height="1"/><rect x="314" y="766" width="1" height="1"/><rect x="314" y="768" width="1" height="1"/><rect x="314" y="770" width="1" height="1"/><rect x="314" y="772" width="1" height="1"/><rect x="314" y="774" width="1" height="1"/><rect x="314" y="776" width="1" height="1"/><rect x="314" y="778" width="1" height="1"/><rect x="314" y="780" width="1" height="1"/><rect x="314" y="782" width="1" height="1"/><rect x="314" y="784" width="1" height="1"/><rect x="314" y="786" width="1" height="1"/><rect x="314" y="788" width="1" height="1"/><rect x="314" y="790" width="1" height="1"/><rect x="314" y="792" width="1" height="1"/><rect x="314" y="794" width="1" height="1"/><rect x="314" y="796" width="1" height="1"/><rect x="314" y="798" width="1" height="1"/><rect x="314" y="800" width="1" height="1"/><rect x="314" y="802" width="1" height="1"/><rect x="314" y="804" width="1" height="1"/><rect x="314" y="806" width="1" height="1"/><rect x="314" y="808" width="1" height="1"/><rect x="314" y="810" width="1" height="1"/><rect x="314" y="812" width="1" height="1"/><rect x="314" y="814" width="1" height="1"/><rect x="314" y="816" width="1" height="1"/><rect x="314" y="818" width="1" height="1"/><rect x="314" y="820" width="1" height="1"/><rect x="314" y="822" width="1" height="1"/><rect x="314" y="824" width="1" height="1"/><rect x="314" y="826" width="1" height="1"/><rect x="314" y="828" width="1" height="1"/><rect x="314" y="830" width="1" height="1"/><rect x="314" y="832" width="1" height="1"/><rect x="314" y="834" width="1" height="1"/><rect x="314" y="836" width="1" height="1"/><rect x="314" y="838" width="1" height="1"/><rect x="314" y="840" width="1" height="1"/><rect x="314" y="842" width="1" height="1"/><rect x="314" y="844" width="1" height="1"/><rect x="314" y="846" width="1" height="1"/><rect x="314" y="848" width="1" height="1"/><rect x="314" y="850" width="1" height="1"/><rect x="316" y="760" width="1" height="1"/><rect x="318" y="760" width="1" height="1"/><rect x="320" y="760" width="1" height="1"/><rect x="322" y="760" width="1" height="1"/><rect x="324" y="760" width="1" height="1"/><rect x="316" y="776" width="1" height="1"/><rect x="318" y="776" width="1" height="1"/><rect x="320" y="776" width="1" height="1"/><rect x="322" y="776" width="1" height="1"/><rect x="324" y="776" width="1" height="1"/><rect x="316" y="840" width="1" height="1"/><rect x="318" y="840" width="1" height="1"/><rect x="320" y="840" width="1" height="1"/><rect x="322" y="840" width="1" height="1"/><rect x="324" y="840" width="1" height="1"/><rect x="320" y="792" width="1" height="1"/><rect x="322" y="792" width="1" height="1"/><rect x="324" y="792" width="1" height="1"/><rect x="320" y="808" width="1" height="1"/><rect x="322" y="808" width="1" height="1"/><rect x="324" y="808" width="1" height="1"/><rect x="320" y="824" width="1" height="1"/><rect x="322" y="824" width="1" height="1"/><rect x="324" y="824" width="1" height="1"/><rect x="320" y="856" width="1" height="1"/><rect x="322" y="856" width="1" height="1"/><rect x="324" y="856" width="1" height="1"/></g><rect x="310.5" y="788.5" width="8" height="8" rx="1" fill="#fbfbfb" stroke="#9a9a9a"/><rect x="312" y="792" width="5" height="1" fill="#2f4fa0"/><rect x="314" y="790" width="1" height="5" fill="#2f4fa0"/><rect x="310.5" y="804.5" width="8" height="8" rx="1" fill="#fbfbfb" stroke="#9a9a9a"/><rect x="312" y="808" width="5" height="1" fill="#2f4fa0"/><rect x="314" y="806" width="1" height="5" fill="#2f4fa0"/><rect x="310.5" y="820.5" width="8" height="8" rx="1" fill="#fbfbfb" stroke="#9a9a9a"/><rect x="312" y="824" width="5" height="1" fill="#2f4fa0"/><rect x="314" y="822" width="1" height="5" fill="#2f4fa0"/><rect x="310.5" y="852.5" width="8" height="8" rx="1" fill="#fbfbfb" stroke="#9a9a9a"/><rect x="312" y="856" width="5" height="1" fill="#2f4fa0"/><rect x="314" y="854" width="1" height="5" fill="#2f4fa0"/><rect x="328.5" y="756.5" width="10" height="8" rx="1.5" fill="#e4e9f2" stroke="#5a6c8c"/><rect x="331" y="759" width="5" height="1" fill="#2a3a6a"/><rect x="331" y="761" width="5" height="1" fill="#2a3a6a"/>
<path d="M334 770L338 773V778L334 781L330 778V773Z" fill="#1e4fc0"/><path d="M334 770L338 773L334 776L330 773Z" fill="#9cc4f4"/><path d="M330 773L334 776V781L330 778Z" fill="#5a92e0"/>
<path d="M337.5 786.5Q335 785.5 334 788.5L331.5 796.5Q330.5 799 328 798" stroke="#111" stroke-width="1.4" fill="none"/><path d="M330.5 790H335.5" stroke="#111" stroke-width="1.1"/><path d="M334 791.5L339 796.5M339 791.5L334 796.5" stroke="#111" stroke-width="1.4"/>
<rect x="326.5" y="802.5" width="13" height="12" fill="#dfe6f5" stroke="#4a6ab0"/><rect x="327" y="803" width="12" height="2" fill="#7aa0e0"/><rect x="328" y="808" width="4" height="3" fill="#33dd22"/><rect x="331" y="806" width="5" height="3" fill="#33dd22"/><rect x="329" y="809" width="2" height="1" fill="#111"/><rect x="332" y="807" width="3" height="1" fill="#111"/><rect x="336" y="807" width="3" height="1" fill="#8aa"/><rect x="328" y="812" width="9" height="1" fill="#8aa"/>
<path d="M328.8 817.3Q327 819.3 328.8 821.5M329.8 821.5L332.8 817.5M335 820H340.5M327 823.5H340.5M327 826.5H333M327 829.5H333M333.5 828H338.5M336 825.5V830.5M339 825Q341.3 828 339 831" stroke="#111" stroke-width="1.2" fill="none"/>
<path d="M334 834L338 837V842L334 845L330 842V837Z" fill="#b040b8"/><path d="M334 834L338 837L334 840L330 837Z" fill="#f0b8f4"/><path d="M330 837L334 840V845L330 842Z" fill="#d070d8"/>
<path d="M325 853L329 849L333 853L329 857Z" fill="#f0c020" stroke="#b08810" stroke-width="0.6"/><path d="M334 852L337 855L334 858L331 855Z" fill="#e070e8"/><path d="M336 857L339 860L336 863L333 860Z" fill="#5aa0f0"/><path d="M329.5 857V861H333" stroke="#6a7a9a" fill="none"/>
<g fill="#8c8c8c"><rect x="501" y="768" width="1" height="1"/><rect x="501" y="770" width="1" height="1"/><rect x="501" y="782" width="1" height="1"/><rect x="501" y="784" width="1" height="1"/><rect x="501" y="786" width="1" height="1"/><rect x="501" y="788" width="1" height="1"/><rect x="501" y="790" width="1" height="1"/><rect x="501" y="792" width="1" height="1"/><rect x="501" y="794" width="1" height="1"/><rect x="501" y="796" width="1" height="1"/><rect x="501" y="798" width="1" height="1"/><rect x="501" y="800" width="1" height="1"/><rect x="501" y="802" width="1" height="1"/><rect x="501" y="804" width="1" height="1"/><rect x="501" y="806" width="1" height="1"/><rect x="501" y="808" width="1" height="1"/><rect x="501" y="810" width="1" height="1"/><rect x="501" y="812" width="1" height="1"/><rect x="501" y="814" width="1" height="1"/><rect x="501" y="816" width="1" height="1"/><rect x="501" y="818" width="1" height="1"/><rect x="501" y="820" width="1" height="1"/><rect x="501" y="822" width="1" height="1"/><rect x="501" y="824" width="1" height="1"/><rect x="501" y="826" width="1" height="1"/><rect x="501" y="828" width="1" height="1"/><rect x="501" y="830" width="1" height="1"/><rect x="501" y="832" width="1" height="1"/><rect x="501" y="834" width="1" height="1"/><rect x="501" y="836" width="1" height="1"/><rect x="501" y="838" width="1" height="1"/><rect x="501" y="840" width="1" height="1"/><rect x="507" y="776" width="1" height="1"/><rect x="509" y="776" width="1" height="1"/><rect x="511" y="776" width="1" height="1"/><rect x="503" y="824" width="1" height="1"/><rect x="505" y="824" width="1" height="1"/><rect x="507" y="824" width="1" height="1"/><rect x="509" y="824" width="1" height="1"/><rect x="511" y="824" width="1" height="1"/><rect x="503" y="840" width="1" height="1"/><rect x="505" y="840" width="1" height="1"/><rect x="507" y="840" width="1" height="1"/><rect x="509" y="840" width="1" height="1"/><rect x="511" y="840" width="1" height="1"/><rect x="520" y="784" width="1" height="1"/><rect x="520" y="786" width="1" height="1"/><rect x="520" y="788" width="1" height="1"/><rect x="520" y="790" width="1" height="1"/><rect x="520" y="792" width="1" height="1"/><rect x="520" y="794" width="1" height="1"/><rect x="520" y="796" width="1" height="1"/><rect x="520" y="798" width="1" height="1"/><rect x="520" y="800" width="1" height="1"/><rect x="520" y="802" width="1" height="1"/><rect x="520" y="804" width="1" height="1"/><rect x="520" y="806" width="1" height="1"/><rect x="520" y="808" width="1" height="1"/><rect x="522" y="792" width="1" height="1"/><rect x="524" y="792" width="1" height="1"/><rect x="526" y="792" width="1" height="1"/><rect x="528" y="792" width="1" height="1"/><rect x="530" y="792" width="1" height="1"/><rect x="522" y="808" width="1" height="1"/><rect x="524" y="808" width="1" height="1"/><rect x="526" y="808" width="1" height="1"/><rect x="528" y="808" width="1" height="1"/><rect x="530" y="808" width="1" height="1"/></g><rect x="497.5" y="772.5" width="8" height="8" rx="1" fill="#fbfbfb" stroke="#9a9a9a"/><rect x="499" y="776" width="5" height="1" fill="#2f4fa0"/><defs><linearGradient id="dbg" x1="0" x2="1" y1="0" y2="0"><stop offset="0" stop-color="#f0a818"/><stop offset="0.35" stop-color="#fff4b0"/><stop offset="0.6" stop-color="#f8d030"/><stop offset="1" stop-color="#d8c010"/></linearGradient></defs><path d="M496.5 754.5Q502 751.5 507.5 754.5V765.5Q502 768.5 496.5 765.5Z" fill="url(#dbg)" stroke="#8a8060" stroke-width="0.9"/><ellipse cx="502" cy="754.6" rx="5" ry="1.6" fill="#fff8d0" stroke="#b0a070" stroke-width="0.5"/>
<rect x="512.5" y="770.5" width="14" height="10" fill="#fdfdf8" stroke="#b8b49a"/><path d="M527 771V781H513" stroke="#555" fill="none"/><g fill="#2040c0"><rect x="515" y="773" width="3" height="1"/><rect x="519" y="773" width="3" height="1"/><rect x="523" y="773" width="2" height="1"/><rect x="515" y="775" width="9" height="1"/><rect x="515" y="777" width="3" height="1"/><rect x="519" y="777" width="5" height="1"/></g><rect x="531.5" y="786.5" width="14" height="10" fill="#fdfdf8" stroke="#b8b49a"/><path d="M545.5 787V796.5H532" stroke="#555" fill="none"/><text x="538.5" y="794.8" font-family="Liberation Sans" font-weight="bold" font-size="8.6" fill="#00007a" stroke="#00007a" stroke-width="0.25" text-anchor="middle" textLength="11" lengthAdjust="spacingAndGlyphs">abc</text><rect x="531.5" y="802.5" width="14" height="10" fill="#fdfdf8" stroke="#b8b49a"/><path d="M545.5 803V812.5H532" stroke="#555" fill="none"/><text x="538.5" y="810.8" font-family="Liberation Sans" font-weight="bold" font-size="8.6" fill="#00007a" stroke="#00007a" stroke-width="0.25" text-anchor="middle" textLength="11" lengthAdjust="spacingAndGlyphs">abc</text><rect x="512.5" y="818.5" width="14" height="10" fill="#fdfdf8" stroke="#b8b49a"/><path d="M526.5 819V828.5H513" stroke="#555" fill="none"/><text x="519.5" y="826.8" font-family="Liberation Sans" font-weight="bold" font-size="8.6" fill="#00007a" stroke="#00007a" stroke-width="0.25" text-anchor="middle" textLength="11" lengthAdjust="spacingAndGlyphs">abc</text><rect x="512.5" y="834.5" width="14" height="10" fill="#fdfdf8" stroke="#b8b49a"/><path d="M526.5 835V844.5H513" stroke="#555" fill="none"/><text x="519.5" y="842.8" font-family="Liberation Sans" font-weight="bold" font-size="8.6" fill="#00007a" stroke="#00007a" stroke-width="0.25" text-anchor="middle" textLength="11" lengthAdjust="spacingAndGlyphs">abc</text></svg>
<div class="a" style="left:344px;top:768px;width:31px;height:16px;background:#ececec"></div>
<div class="a" style="left:550px;top:784px;width:44px;height:16px;background:#0078d7"></div>
<div class="t tr" style="left:346px;top:754px">Constants</div>
<div class="t tr" style="left:346px;top:770px">Fields</div>
<div class="t tr" style="left:346px;top:786px">Functions</div>
<div class="t tr" style="left:346px;top:802px">Global Objects</div>
<div class="t tr" style="left:346px;top:818px">Operators</div>
<div class="t tr" style="left:346px;top:834px">Report Parameters</div>
<div class="t tr" style="left:346px;top:850px">Reporting Constants</div>
<div class="t tr" style="left:513px;top:754px;color:#111">jsonDataSource1</div>
<div class="t tr" style="left:533px;top:770px;color:#111">data</div>
<div class="t tr" style="left:552px;top:786px;color:#fff">capacity</div>
<div class="t tr" style="left:552px;top:802px;color:#111">color</div>
<div class="t tr" style="left:533px;top:818px;color:#111">id</div>
<div class="t tr" style="left:533px;top:834px;color:#111">name</div>
<div class="a" style="left:577px;top:803px;width:126px;height:31px;background:#f7f7f7;border:1px solid #e2e2e2;border-radius:3px"></div>
<div class="t tr" style="left:583px;top:806px;color:#5a5a5a;-webkit-text-stroke:0">capacity (System.String)</div>
<div class="t tr" style="left:583px;top:819px;color:#5a5a5a;-webkit-text-stroke:0">data.capacity</div></div>
</div>

</body></html>
